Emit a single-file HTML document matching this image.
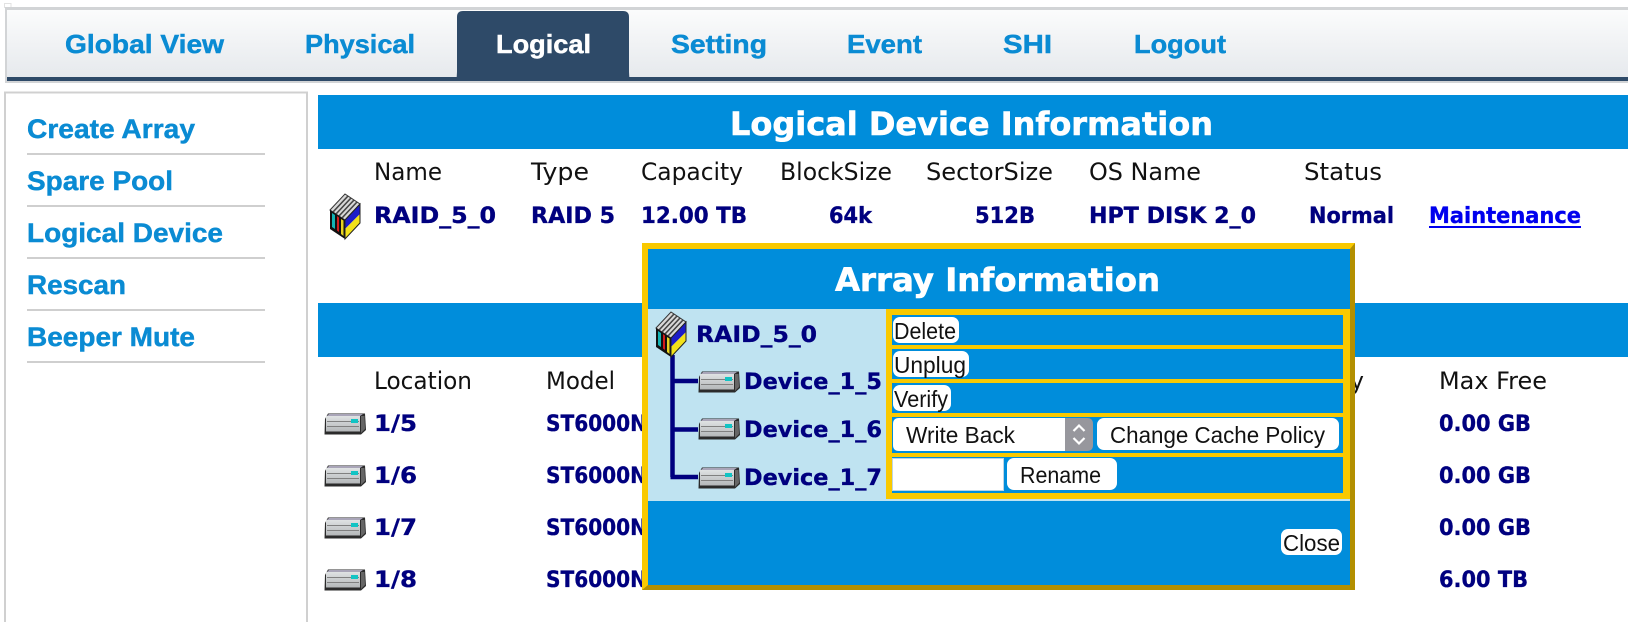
<!DOCTYPE html>
<html>
<head>
<meta charset="utf-8">
<style>
html,body{margin:0;padding:0;background:#fff;width:1628px;height:622px;overflow:hidden}
svg{display:block}
.nav{font:bold 26px "Liberation Sans",sans-serif;fill:#0a8bd3;stroke:#0a8bd3;stroke-width:.45px}
.side{font:bold 27px "Liberation Sans",sans-serif;fill:#0a8bd3;stroke:#0a8bd3;stroke-width:.45px}
.h{font:bold 32px "DejaVu Sans",sans-serif;fill:#fff;stroke:#fff;stroke-width:.6px}
.th{font:24px "DejaVu Sans",sans-serif;fill:#111}
.td{font:bold 22px "DejaVu Sans",sans-serif;fill:#00007f;stroke:#00007f;stroke-width:.35px}
.b{font:23px "Liberation Sans",sans-serif;fill:#111}
</style>
</head>
<body>
<svg width="1628" height="622" viewBox="0 0 1628 622" xmlns="http://www.w3.org/2000/svg">
<defs>
<linearGradient id="navg" x1="0" y1="0" x2="0" y2="1"><stop offset="0" stop-color="#fbfcfc"/><stop offset="1" stop-color="#e6e9ed"/></linearGradient>
<linearGradient id="disk" x1="0" y1="0" x2="0" y2="1"><stop offset="0" stop-color="#dfe2e3"/><stop offset="1" stop-color="#b4b7b9"/></linearGradient>
<g id="raid">
<path d="M1 17L16 1L31 11L16 27Z" fill="#d8d8d8" stroke="#333" stroke-width="1"/>
<path d="M4 19L19 3M7 21L22 5M10 23L25 7M13 25L28 9" stroke="#444" stroke-width="1.600" fill="none"/>
<path d="M1 17L16 27V46L1 36Z" fill="#111"/>
<path d="M3 20L6 22V36L3 34Z" fill="#11b3b3"/>
<path d="M8 23L10 24.500V39L8 37.500Z" fill="#d21c1c"/>
<path d="M12 26L14.500 27.500V43L12 41Z" fill="#e8d320"/>
<path d="M16 27L31 11V21L16 36Z" fill="#1c1cc8"/>
<path d="M16 36L31 21V30L16 46Z" fill="#f2e21a"/>
<path d="M16 27L31 11V30L16 46Z" fill="none" stroke="#222" stroke-width="1"/>
</g>
<g id="hd">
<path d="M4 0.500H41L42 17L37 21.500H0.500L1 6Z" fill="#2b2b2b"/>
<path d="M5 1H39L36 3H3Z" fill="#a9a5b8"/>
<rect x="2" y="3" width="34" height="15.500" fill="url(#disk)"/>
<path d="M3 8.500H35M3 13.500H35" stroke="#808080" stroke-width="1"/>
<rect x="27" y="6" width="7" height="4" fill="#12c4c4"/>
<path d="M37 3H40.500L41 16L37 20Z" fill="#666"/>
</g>
</defs>

<!-- nav -->
<path d="M4.500 8V3.500H11V8" fill="none" stroke="#e2e2e2"/>
<rect x="5" y="7" width="1623" height="76" fill="#d2d4d6"/>
<rect x="7" y="10" width="1621" height="67" fill="url(#navg)"/>
<rect x="7" y="77" width="1621" height="4" fill="#2e4a68"/>
<path d="M456 81Q457 76 457 72V17Q457 11 463 11H623Q629 11 629 17V72Q629 76 630 81Z" fill="#2e4a68"/>
<text class="nav" x="65" y="53" textLength="159" lengthAdjust="spacingAndGlyphs">Global View</text>
<text class="nav" x="305" y="53" textLength="110" lengthAdjust="spacingAndGlyphs">Physical</text>
<text class="nav" x="496" y="53" textLength="95" lengthAdjust="spacingAndGlyphs" style="fill:#fff;stroke:#fff">Logical</text>
<text class="nav" x="671" y="53" textLength="96" lengthAdjust="spacingAndGlyphs">Setting</text>
<text class="nav" x="847" y="53" textLength="75" lengthAdjust="spacingAndGlyphs">Event</text>
<text class="nav" x="1003" y="53" textLength="49" lengthAdjust="spacingAndGlyphs">SHI</text>
<text class="nav" x="1134" y="53" textLength="92" lengthAdjust="spacingAndGlyphs">Logout</text>

<!-- sidebar -->
<path d="M5 622V92.500H307V622" fill="none" stroke="#d0d0d0" stroke-width="2"/>
<text class="side" x="27" y="138" textLength="168" lengthAdjust="spacingAndGlyphs">Create Array</text>
<rect x="27" y="153" width="238" height="2" fill="#cfcfcf"/>
<text class="side" x="27" y="190" textLength="146" lengthAdjust="spacingAndGlyphs">Spare Pool</text>
<rect x="27" y="205" width="238" height="2" fill="#cfcfcf"/>
<text class="side" x="27" y="242" textLength="196" lengthAdjust="spacingAndGlyphs">Logical Device</text>
<rect x="27" y="257" width="238" height="2" fill="#cfcfcf"/>
<text class="side" x="27" y="294" textLength="99" lengthAdjust="spacingAndGlyphs">Rescan</text>
<rect x="27" y="309" width="238" height="2" fill="#cfcfcf"/>
<text class="side" x="27" y="346" textLength="168" lengthAdjust="spacingAndGlyphs">Beeper Mute</text>
<rect x="27" y="361" width="238" height="2" fill="#cfcfcf"/>

<!-- logical table -->
<rect x="318" y="95" width="1310" height="54" fill="#008ddb"/>
<text class="h" x="730" y="135" textLength="483" lengthAdjust="spacingAndGlyphs">Logical Device Information</text>
<text class="th" x="374" y="180" textLength="68" lengthAdjust="spacingAndGlyphs">Name</text>
<text class="th" x="531" y="180" textLength="58" lengthAdjust="spacingAndGlyphs">Type</text>
<text class="th" x="641" y="180" textLength="102" lengthAdjust="spacingAndGlyphs">Capacity</text>
<text class="th" x="780" y="180" textLength="112" lengthAdjust="spacingAndGlyphs">BlockSize</text>
<text class="th" x="926" y="180" textLength="127" lengthAdjust="spacingAndGlyphs">SectorSize</text>
<text class="th" x="1089" y="180" textLength="112" lengthAdjust="spacingAndGlyphs">OS Name</text>
<text class="th" x="1304" y="180" textLength="78" lengthAdjust="spacingAndGlyphs">Status</text>
<use href="#raid" x="329" y="193"/>
<text class="td" x="374" y="223" textLength="122" lengthAdjust="spacingAndGlyphs">RAID_5_0</text>
<text class="td" x="531" y="223" textLength="84" lengthAdjust="spacingAndGlyphs">RAID 5</text>
<text class="td" x="641" y="223" textLength="106" lengthAdjust="spacingAndGlyphs">12.00 TB</text>
<text class="td" x="829" y="223" textLength="43" lengthAdjust="spacingAndGlyphs">64k</text>
<text class="td" x="975" y="223" textLength="60" lengthAdjust="spacingAndGlyphs">512B</text>
<text class="td" x="1089" y="223" textLength="167" lengthAdjust="spacingAndGlyphs">HPT DISK 2_0</text>
<text class="td" x="1309" y="223" textLength="85" lengthAdjust="spacingAndGlyphs">Normal</text>
<text class="td" x="1429" y="223" textLength="152" lengthAdjust="spacingAndGlyphs" style="fill:#0000ee;stroke:#0000ee">Maintenance</text>
<rect x="1429" y="226" width="152" height="2" fill="#0000ee"/>

<!-- physical table -->
<rect x="318" y="303" width="1310" height="54" fill="#008ddb"/>
<text class="th" x="374" y="389" textLength="98" lengthAdjust="spacingAndGlyphs">Location</text>
<text class="th" x="546" y="389" textLength="69" lengthAdjust="spacingAndGlyphs">Model</text>
<text class="th" x="1262" y="389" textLength="102" lengthAdjust="spacingAndGlyphs">Capacity</text>
<text class="th" x="1439" y="389" textLength="108" lengthAdjust="spacingAndGlyphs">Max Free</text>

<use href="#hd" x="324" y="413"/>
<text class="td" x="374" y="431" textLength="43" lengthAdjust="spacingAndGlyphs">1/5</text>
<text class="td" x="546" y="431" textLength="121" lengthAdjust="spacingAndGlyphs">ST6000NM</text>
<text class="td" x="1439" y="431" textLength="92" lengthAdjust="spacingAndGlyphs">0.00 GB</text>

<use href="#hd" x="324" y="465"/>
<text class="td" x="374" y="483" textLength="43" lengthAdjust="spacingAndGlyphs">1/6</text>
<text class="td" x="546" y="483" textLength="121" lengthAdjust="spacingAndGlyphs">ST6000NM</text>
<text class="td" x="1439" y="483" textLength="92" lengthAdjust="spacingAndGlyphs">0.00 GB</text>

<use href="#hd" x="324" y="517"/>
<text class="td" x="374" y="535" textLength="43" lengthAdjust="spacingAndGlyphs">1/7</text>
<text class="td" x="546" y="535" textLength="121" lengthAdjust="spacingAndGlyphs">ST6000NM</text>
<text class="td" x="1439" y="535" textLength="92" lengthAdjust="spacingAndGlyphs">0.00 GB</text>

<use href="#hd" x="324" y="569"/>
<text class="td" x="374" y="587" textLength="43" lengthAdjust="spacingAndGlyphs">1/8</text>
<text class="td" x="546" y="587" textLength="121" lengthAdjust="spacingAndGlyphs">ST6000NM</text>
<text class="td" x="1439" y="587" textLength="89" lengthAdjust="spacingAndGlyphs">6.00 TB</text>

<!-- popup -->
<rect x="642" y="243" width="713" height="347" fill="#f9c900"/>
<path d="M1355 243V590H642L648 585H1350V249Z" fill="#b38f00"/>
<rect x="648" y="249" width="702" height="336" fill="#008ddb"/>
<text class="h" x="835" y="291" textLength="325" lengthAdjust="spacingAndGlyphs">Array Information</text>
<rect x="648" y="309" width="702" height="192" fill="#bfe3f1"/>

<!-- tree -->
<path d="M672.500 355V477M672 381H698M672 429.500H698M670.500 477H698" stroke="#00007f" stroke-width="4.500" fill="none"/>
<use href="#raid" x="655" y="311"/>
<text class="td" x="696" y="342" textLength="121" lengthAdjust="spacingAndGlyphs">RAID_5_0</text>
<use href="#hd" x="698" y="371"/>
<text class="td" x="744" y="389" textLength="138" lengthAdjust="spacingAndGlyphs">Device_1_5</text>
<use href="#hd" x="698" y="418"/>
<text class="td" x="744" y="437" textLength="138" lengthAdjust="spacingAndGlyphs">Device_1_6</text>
<use href="#hd" x="698" y="467"/>
<text class="td" x="744" y="485" textLength="138" lengthAdjust="spacingAndGlyphs">Device_1_7</text>

<!-- action frame -->
<rect x="886" y="309" width="464" height="190" fill="#f9c900"/>
<rect x="892" y="315" width="451" height="30" fill="#008ddb"/>
<rect x="892" y="349" width="451" height="30" fill="#008ddb"/>
<rect x="892" y="383" width="451" height="30" fill="#008ddb"/>
<rect x="892" y="417" width="451" height="36" fill="#008ddb"/>
<rect x="892" y="457" width="451" height="36" fill="#008ddb"/>

<rect x="893" y="317" width="66" height="26" rx="7" fill="#fff"/>
<text class="b" x="894" y="339" textLength="62" lengthAdjust="spacingAndGlyphs">Delete</text>
<rect x="893" y="351" width="76" height="26" rx="7" fill="#fff"/>
<text class="b" x="894" y="373" textLength="72" lengthAdjust="spacingAndGlyphs">Unplug</text>
<rect x="893" y="385" width="58" height="26" rx="7" fill="#fff"/>
<text class="b" x="894" y="407" textLength="54" lengthAdjust="spacingAndGlyphs">Verify</text>

<path d="M899 418H1065V451H899Q893 451 893 445V424Q893 418 899 418Z" fill="#fff"/>
<path d="M1065 418H1087Q1093 418 1093 424V445Q1093 451 1087 451H1065Z" fill="#97979d"/>
<path d="M1073.500 431L1079 425.500L1084.500 431M1073.500 438L1079 443.500L1084.500 438" stroke="#fff" stroke-width="2.200" fill="none"/>
<text class="b" x="906" y="443" textLength="109" lengthAdjust="spacingAndGlyphs">Write Back</text>
<rect x="1097" y="418" width="242" height="32" rx="7" fill="#fff"/>
<text class="b" x="1110" y="443" textLength="215" lengthAdjust="spacingAndGlyphs">Change Cache Policy</text>

<rect x="892.500" y="458.500" width="111" height="32" fill="#fff" stroke="#bcd5e4"/>
<rect x="1007" y="458" width="110" height="32" rx="7" fill="#fff"/>
<text class="b" x="1020" y="483" textLength="81" lengthAdjust="spacingAndGlyphs">Rename</text>

<rect x="1281" y="529" width="61" height="26" rx="7" fill="#fff"/>
<text class="b" x="1283" y="551" textLength="57" lengthAdjust="spacingAndGlyphs">Close</text>
</svg>
</body>
</html>
